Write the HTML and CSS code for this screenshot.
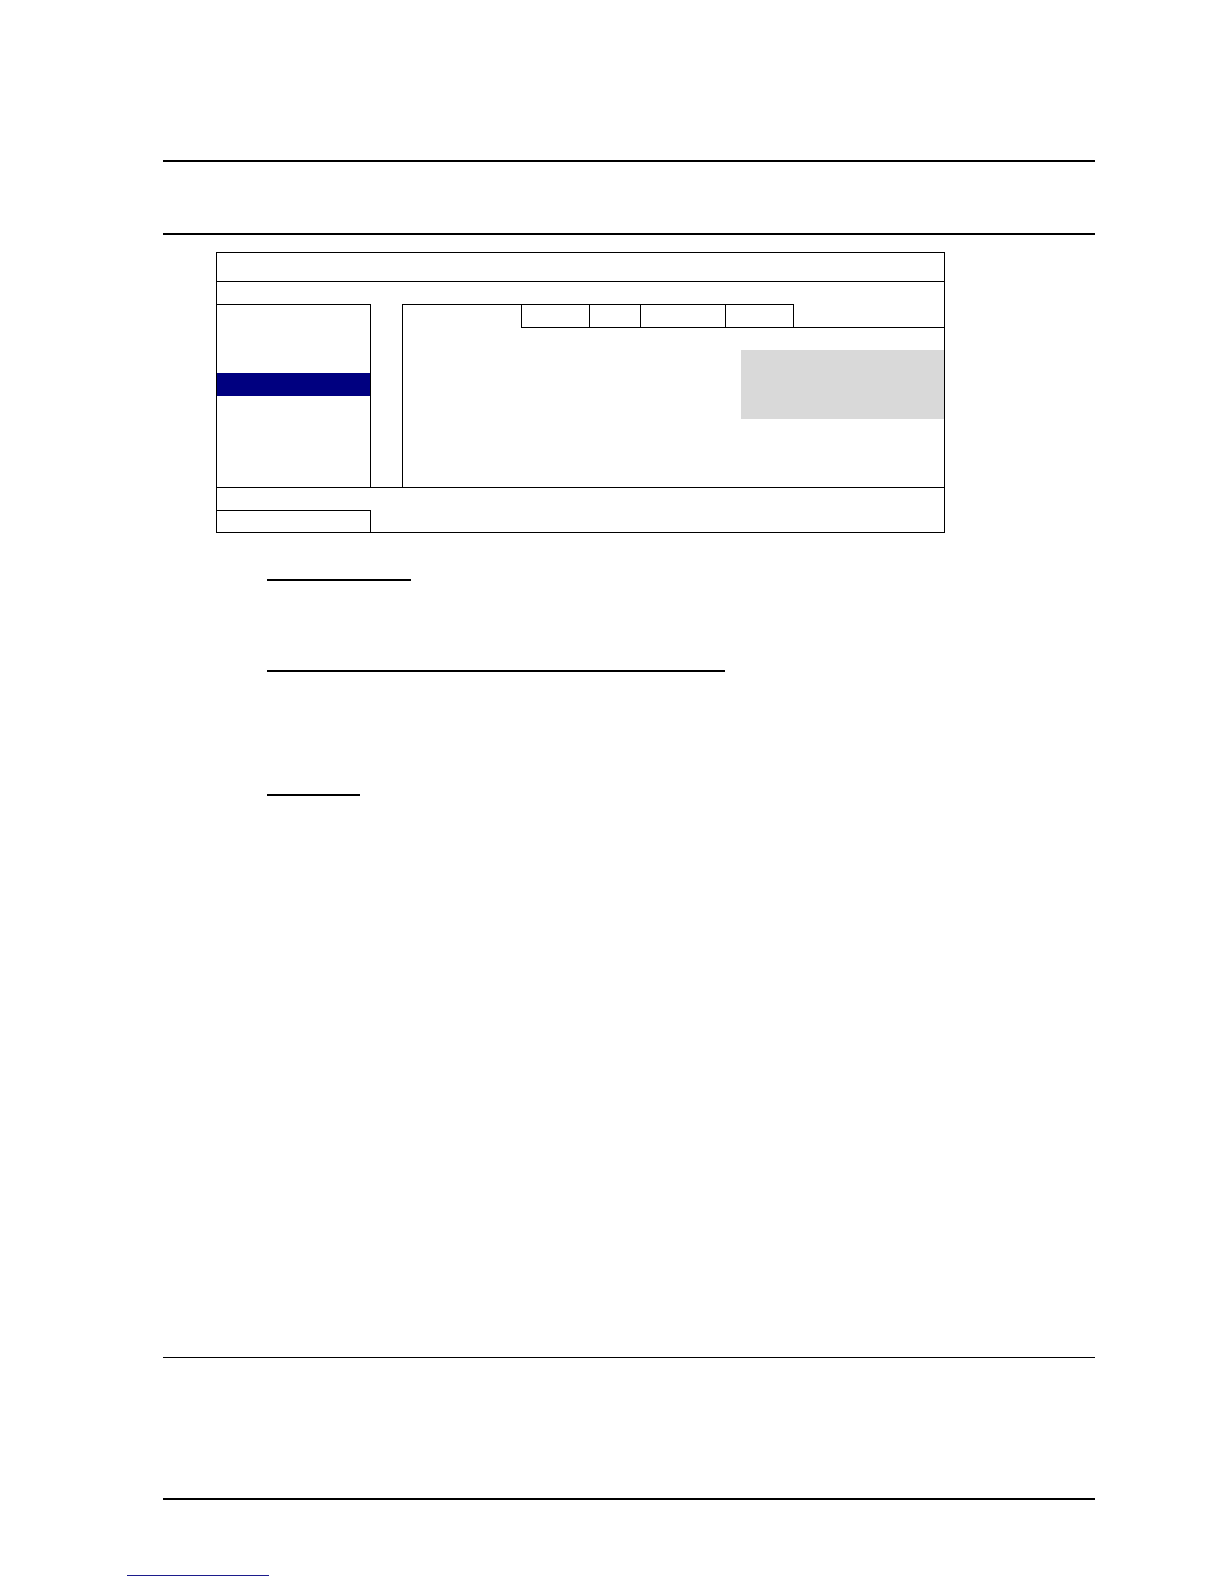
FILE: index.html
```html
<!DOCTYPE html>
<html lang="en">
<head>
<meta charset="utf-8">
<title>Manual page</title>
<link rel="stylesheet" href="styles.css">
</head>
<body>
<div class="page">
  <div class="rule rule-thick"></div>
  <div class="rule rule-thick rule-second"></div>

  <div class="dialog">
    <div class="titlebar"></div>
    <div class="dialog-body">
      <div class="panels">
        <div class="left-panel">
          <div class="menu-selected"></div>
        </div>
        <div class="right-panel">
          <div class="tabrow">
            <div class="tab-lead"></div>
            <div class="tabs">
              <div class="tab tab-a"></div>
              <div class="tab tab-b"></div>
              <div class="tab tab-c"></div>
              <div class="tab tab-d"></div>
            </div>
          </div>
          <div class="grey-field"></div>
        </div>
      </div>
      <div class="bottom-area">
        <div class="bottom-box"></div>
      </div>
    </div>
  </div>

  <div class="heading-rule h-one"></div>
  <div class="heading-rule h-two"></div>
  <div class="heading-rule h-three"></div>

  <div class="rule rule-thin footer-top"></div>
  <div class="rule rule-thick footer-bottom"></div>
  <div class="link-rule"></div>
</div>
</body>
</html>
```

FILE: styles.css
```css
html, body {
  margin: 0;
  padding: 0;
  background: #ffffff;
  font-family: "Liberation Sans", Arial, sans-serif;
}

.page {
  margin-left: 163px;
  width: 932px;
  padding-top: 160px;
  padding-bottom: 8px;
}

.rule {
  width: 932px;
  background: #000000;
}

.rule-thick {
  height: 2px;
}

.rule-thin {
  height: 1px;
}

.rule-second {
  margin-top: 71px;
}

/* Dialog mock-up */
.dialog {
  margin-top: 17px;
  margin-left: 53px;
  width: 729px;
  box-sizing: border-box;
  border: 1px solid #000000;
}

.titlebar {
  height: 28px;
  border-bottom: 1px solid #000000;
}

.dialog-body {
  padding-top: 22px;
}

.panels {
  display: flex;
  height: 183px;
  border-bottom: 1px solid #000000;
}

.left-panel {
  width: 153px;
  border-top: 1px solid #000000;
  border-right: 1px solid #000000;
}

.menu-selected {
  margin-top: 68px;
  height: 23px;
  background: #000080;
}

.right-panel {
  flex: 1;
  margin-left: 31px;
  border-left: 1px solid #000000;
  display: flex;
  flex-direction: column;
}

.tabrow {
  display: flex;
}

.tab-lead {
  width: 118px;
  border-top: 1px solid #000000;
}

.tabs {
  flex: 1;
  display: flex;
  height: 23px;
  border-bottom: 1px solid #000000;
}

.tab {
  border-top: 1px solid #000000;
  border-left: 1px solid #000000;
}

.tab-a { width: 67px; }
.tab-b { width: 50px; }
.tab-c { width: 84px; }
.tab-d {
  width: 67px;
  border-right: 1px solid #000000;
}

.grey-field {
  align-self: flex-end;
  margin-top: 22px;
  width: 203px;
  height: 69px;
  background: #d9d9d9;
}

.bottom-area {
  height: 44px;
  display: flex;
  align-items: flex-end;
}

.bottom-box {
  width: 154px;
  height: 22px;
  box-sizing: border-box;
  border-top: 1px solid #000000;
  border-right: 1px solid #000000;
}

/* Underlined headings */
.heading-rule {
  margin-left: 104px;
  height: 2px;
  background: #000000;
}

.h-one {
  margin-top: 46px;
  width: 144px;
}

.h-two {
  margin-top: 89px;
  width: 458px;
}

.h-three {
  margin-top: 122px;
  width: 93px;
}

/* Footer */
.footer-top {
  margin-top: 561px;
}

.footer-bottom {
  margin-top: 140px;
}

.link-rule {
  margin-top: 75px;
  margin-left: -36px;
  width: 142px;
  height: 1px;
  background: #1c1c8c;
}
```
